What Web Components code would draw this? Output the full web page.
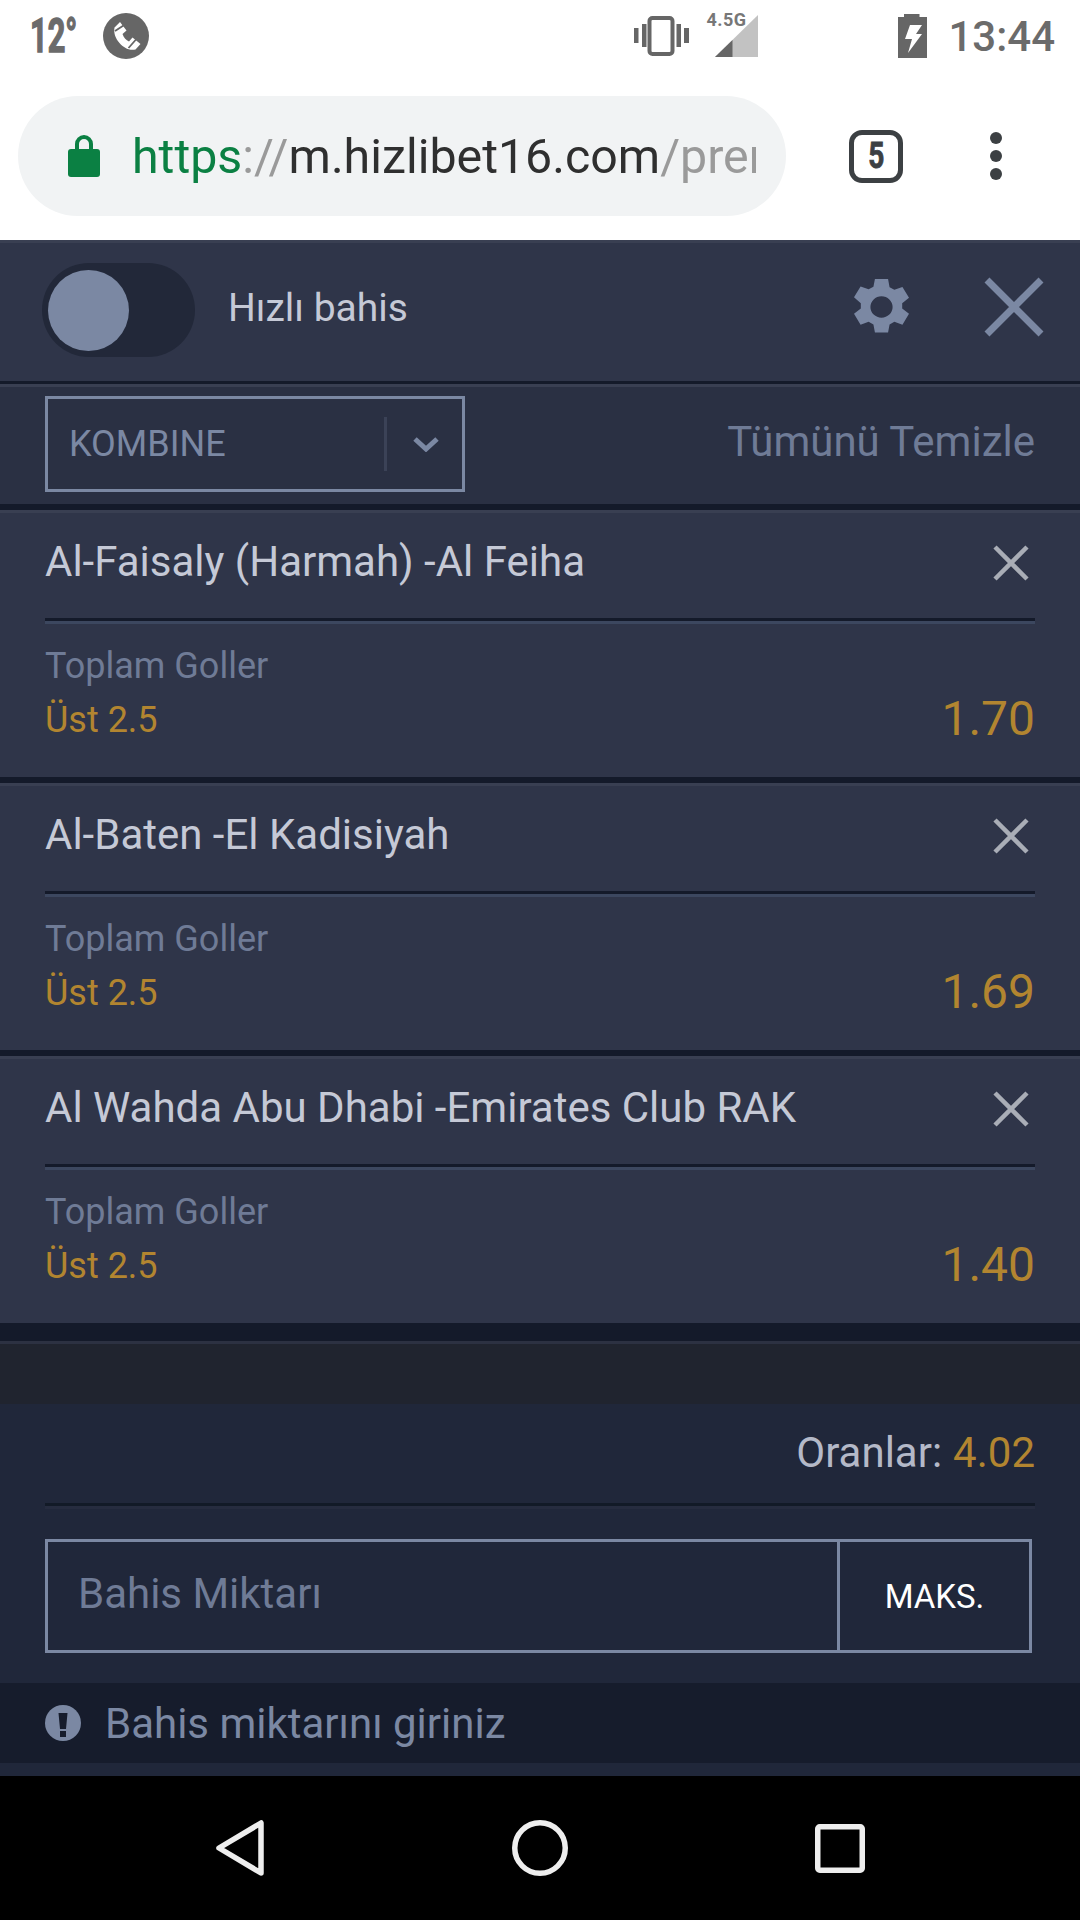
<!DOCTYPE html>
<html lang="tr">
<head>
<meta charset="utf-8">
<title>Bahis</title>
<style>
  html, body { margin: 0; padding: 0; background: #000; }
  body { width: 1080px; height: 1920px; display: flex; flex-direction: column; overflow: hidden; font-family: Roboto, "Liberation Sans", sans-serif; }
</style>
</head>
<body>
<status-bar></status-bar>
<browser-bar url-host="m.hizlibet16.com" url-path="/prem" tabs="5"></browser-bar>
<slip-header></slip-header>
<slip-toolbar></slip-toolbar>
<slip-item match="Al-Faisaly (Harmah) -Al Feiha" odds="1.70"></slip-item>
<slip-item match="Al-Baten -El Kadisiyah" odds="1.69"></slip-item>
<slip-item match="Al Wahda Abu Dhabi -Emirates Club RAK" odds="1.40" last></slip-item>
<slip-footer></slip-footer>
<nav-bar></nav-bar>

<script>
/* STATUS BAR */
class StatusBar extends HTMLElement {
  constructor() {
    super();
    this.attachShadow({mode: 'open'});
    this.shadowRoot.innerHTML = `<style>
      :host { display: flex; align-items: center; height: 72px; background: #fff; color: #6b6b6b; flex: none; }
      .temp { margin-left: 30px; width: 46px; white-space: nowrap; font: 700 48px/48px Roboto, sans-serif; -webkit-text-stroke: 1.500px #6b6b6b; transform: scaleX(.64); transform-origin: left; }
      .call { margin-left: 27px; display: flex; }
      .grow { flex: 1; }
      svg { display: block; }
      .vib { margin-right: 17px; }
      .sig { margin-right: 140px; position: relative; width: 52px; height: 44px; }
      .sig svg { position: absolute; left: 9px; top: 1px; }
      .sig span { position: absolute; left: 0; top: -3px; font: 700 18px/18px Roboto, sans-serif; color: #777; letter-spacing: .5px; }
      .bat { margin-right: 21px; }
      .time { margin-right: 25px; font: 500 42px Roboto, sans-serif; }
    </style>
    <span class="temp">12°</span>
    <span class="call"><svg width="46" height="46" viewBox="0 0 46 46"><circle cx="23" cy="23" r="23" fill="#666"/><path d="M12 14l5-5 6.500 8.500-4 3.500c1.500 4 3.500 6 6.500 7.500l3.500-4 8 6.500-5 5.500c-6.500 1.500-12-2-16-6.500s-6-10-5-15.500z" fill="#fff"/><path d="M12 18l8.500-5.500M25.500 35l7.500-8.500" stroke="#666" stroke-width="1.800" fill="none"/></svg></span>
    <span class="grow"></span>
    <span class="vib"><svg width="55" height="40" viewBox="0 0 55 40"><rect x="15.500" y="2" width="23" height="36" rx="3" fill="none" stroke="#666" stroke-width="4"/><path d="M0 12h4.500v15H0zM8 8h4.500v23H8zM42.500 8H47v23h-4.500zM50 12h5v15h-5z" fill="#666"/></svg></span>
    <span class="sig"><svg width="43" height="42" viewBox="0 0 43 42"><path d="M43 0v42H0z" fill="#c2c2c2"/><path d="M17.500 24.900V42H0z" fill="#666"/></svg><span>4.5G</span></span>
    <span class="bat"><svg width="29" height="44" viewBox="0 0 29 44"><path d="M6 0h15.500v3H29v41H0V3h6z" fill="#666"/><path d="M12 11h12l-6 9h6L10 39l4-14H7z" fill="#fff"/></svg></span>
    <span class="time">13:44</span>`;
  }
}
customElements.define('status-bar', StatusBar);

/* BROWSER BAR */
class BrowserBar extends HTMLElement {
  constructor() {
    super();
    this.attachShadow({mode: 'open'});
    this.shadowRoot.innerHTML = `<style>
      :host { display: flex; align-items: center; height: 168px; background: #fff; flex: none; }
      .pill { margin-left: 18px; width: 768px; height: 120px; border-radius: 60px; background: #f1f3f4; display: flex; align-items: center; box-sizing: border-box; padding-left: 50px; }
      .pill svg { display: block; flex: none; }
      .url { margin-left: 32px; width: 624px; overflow: hidden; white-space: nowrap; font: 400 48.300px Roboto, sans-serif; color: #9a9a9a; }
      .https { color: #0b8043; }
      .host { color: #2f2f2f; }
      .tabs { margin-left: 63px; width: 54px; height: 53px; box-sizing: border-box; border: 5px solid #3c4043; border-radius: 13px; display: flex; align-items: center; justify-content: center; font: 700 36px Roboto, sans-serif; color: #3c4043; }
      .tabs span { display: inline-block; -webkit-text-stroke: .8px #3c4043; transform: scaleX(.78); }
      .dots { margin-left: 87px; width: 12px; display: flex; flex-direction: column; gap: 6px; }
      .dots i { width: 12px; height: 12px; border-radius: 50%; background: #3c4043; }
    </style>
    <div class="pill">
      <svg width="32" height="42" viewBox="0 0 32 42"><path d="M9 18V9a7 7 0 0 1 14 0v9" fill="none" stroke="#0b8043" stroke-width="4"/><rect y="14" width="32" height="28" rx="3" fill="#0b8043"/></svg>
      <div class="url"><span class="https">https</span>://<span class="host">${this.getAttribute('url-host')}</span>${this.getAttribute('url-path')}</div>
    </div>
    <div class="tabs"><span>${this.getAttribute('tabs')}</span></div>
    <div class="dots"><i></i><i></i><i></i></div>`;
  }
}
customElements.define('browser-bar', BrowserBar);

/* SLIP HEADER */
class SlipHeader extends HTMLElement {
  constructor() {
    super();
    this.attachShadow({mode: 'open'});
    this.shadowRoot.innerHTML = `<style>
      :host { display: flex; align-items: center; height: 144px; box-sizing: border-box; background: #2f3549; border-top: 3px solid #393f52; border-bottom: 3px solid #141a2a; padding-bottom: 4px; flex: none; }
      .toggle { margin-left: 42px; width: 147px; height: 94px; border-radius: 47px; background: #222839; display: flex; align-items: center; padding-left: 6px; }
      .toggle i { width: 81px; height: 81px; border-radius: 50%; background: #7b88a3; }
      .label { margin-left: 33px; flex: 1; font: 400 39px Roboto, sans-serif; color: #c5c9d6; padding-bottom: 4px; }
      .gear { margin-right: 75px; display: block; margin-bottom: 6px; }
      .close { margin-right: 36px; display: block; margin-bottom: 6px; }
    </style>
    <div class="toggle"><i></i></div>
    <div class="label">Hızlı bahis</div>
    <svg class="gear" width="55" height="58" viewBox="1.100 0 21.800 24" preserveAspectRatio="none"><path fill="#7b88a3" fill-rule="evenodd" d="M9.400 0h5.200l.6 3.400 1.900 1.100 3.200-1.200 2.600 4.500-2.700 2.200v2.200l2.700 2.200-2.600 4.500-3.200-1.200-1.900 1.100-.6 3.400H9.400l-.6-3.400-1.900-1.100-3.200 1.200-2.600-4.500 2.700-2.200v-2.200L1.100 7.600l2.600-4.500 3.200 1.200 1.900-1.100zM12 7.200a4.400 4.400 0 1 0 0 8.800 4.400 4.400 0 0 0 0-8.800z" transform="translate(0 .4)"/></svg>
    <svg class="close" width="60" height="60" viewBox="0 0 60 60"><path d="M3 3l54 54M57 3L3 57" stroke="#7b88a3" stroke-width="7" fill="none"/></svg>`;
  }
}
customElements.define('slip-header', SlipHeader);

/* TOOLBAR WITH BET TYPE SELECT */
class SlipToolbar extends HTMLElement {
  constructor() {
    super();
    this.attachShadow({mode: 'open'});
    this.shadowRoot.innerHTML = `<style>
      :host { display: flex; align-items: center; justify-content: space-between; height: 126px; box-sizing: border-box; background: #2a3043; border-top: 3px solid #393f52; border-bottom: 6px solid #141a2a; padding: 0 45px; flex: none; }
      .select { width: 420px; height: 96px; box-sizing: border-box; border: 3px solid #7b88a3; display: flex; align-items: center; padding-left: 21px; font: 400 36px Roboto, sans-serif; color: #7b88a3; margin-top: -3px; }
      .select span { flex: 1; }
      .sep { width: 3px; height: 54px; background: #3b4257; }
      .arrow { width: 75px; display: flex; justify-content: center; padding-left: 2px; box-sizing: border-box; }
      .clear { font: 400 42px Roboto, sans-serif; color: #6f7b96; margin-top: -8px; }
    </style>
    <div class="select"><span>KOMBINE</span><div class="sep"></div><div class="arrow"><svg width="26" height="16" viewBox="0 0 26 16"><path d="M2 3l11 10L24 3" fill="none" stroke="#7b88a3" stroke-width="5"/></svg></div></div>
    <div class="clear">Tümünü Temizle</div>`;
  }
}
customElements.define('slip-toolbar', SlipToolbar);

/* ONE SELECTION */
class SlipItem extends HTMLElement {
  constructor() {
    super();
    this.attachShadow({mode: 'open'});
    this.shadowRoot.innerHTML = `<style>
      :host { display: block; height: 273px; box-sizing: border-box; background: #2f3549; border-top: 3px solid #393f52; border-bottom: 6px solid #141a2a; flex: none; padding: 0 45px; }
      :host([last]) { height: 267px; border-bottom: 0; }
      .top { display: flex; align-items: center; justify-content: space-between; height: 108px; box-sizing: border-box; border-bottom: 3px solid #141a2a; box-shadow: 0 3px 0 #3c475f; font: 400 42px Roboto, sans-serif; color: #c5c9d6; padding-bottom: 9px; }
      .top svg { margin-right: 6px; display: block; margin-top: 4px; }
      .bottom { display: flex; justify-content: space-between; align-items: flex-end; padding-top: 22px; }
      .type { font: 400 36px/46px Roboto, sans-serif; color: #6f7b96; }
      .pick { font: 400 36px/46px Roboto, sans-serif; color: #b28530; margin-top: 8px; }
      .odds { font: 400 48px/54px Roboto, sans-serif; color: #b28530; margin-bottom: -3px; }
    </style>
    <div class="top"><span>${this.getAttribute('match')}</span><svg width="36" height="36" viewBox="0 0 36 36"><path d="M2 2l32 32M34 2L2 34" stroke="#a9adb6" stroke-width="4.500" fill="none"/></svg></div>
    <div class="bottom"><div><div class="type">Toplam Goller</div><div class="pick">Üst 2.5</div></div><div class="odds">${this.getAttribute('odds')}</div></div>`;
  }
}
customElements.define('slip-item', SlipItem);

/* TOTALS AND STAKE */
class SlipFooter extends HTMLElement {
  constructor() {
    super();
    this.attachShadow({mode: 'open'});
    this.shadowRoot.innerHTML = `<style>
      :host { display: flex; flex-direction: column; flex: 1; background: #20273a; }
      .band { height: 18px; background: #141a2a; border-bottom: 3px solid #2c3142; }
      .gap { height: 60px; background: #20242f; }
      .total { margin: 0 45px; height: 102px; box-sizing: border-box; border-bottom: 3px solid #121a27; box-shadow: 0 3px 0 #262c3f; padding-bottom: 3px; display: flex; align-items: center; justify-content: flex-end; font: 400 42px Roboto, sans-serif; color: #b4b9c8; }
      .total b { font-weight: 400; color: #b28530; margin-left: 11px; }
      .stake { margin: 33px 48px 0 45px; height: 114px; box-sizing: border-box; border: 3px solid #7b88a3; display: flex; }
      .input { flex: 1; font: 400 42px Roboto, sans-serif; color: #6f7b96; padding: 27px 0 0 30px; }
      .max { width: 192px; box-sizing: border-box; border-left: 3px solid #7b88a3; display: flex; align-items: center; justify-content: center; font: 400 33px Roboto, sans-serif; color: #fff; }
      .alert { margin-top: 30px; height: 80px; background: #161c2c; display: flex; align-items: center; padding-left: 45px; font: 400 42px Roboto, sans-serif; color: #7b88a3; }
      .alert svg { margin-right: 24px; display: block; }
    </style>
    <div class="band"></div>
    <div class="gap"></div>
    <div class="total">Oranlar:<b>4.02</b></div>
    <div class="stake"><div class="input">Bahis Miktarı</div><div class="max">MAKS.</div></div>
    <div class="alert"><svg width="36" height="36" viewBox="0 0 36 36"><circle cx="18" cy="18" r="18" fill="#7b88a3"/><path d="M13.500 8h9l-1.500 16h-6zM15 26h6v6h-6z" fill="#161c2c"/></svg>Bahis miktarını giriniz</div>`;
  }
}
customElements.define('slip-footer', SlipFooter);

/* ANDROID NAV BAR */
class NavBar extends HTMLElement {
  constructor() {
    super();
    this.attachShadow({mode: 'open'});
    this.shadowRoot.innerHTML = `<style>
      :host { display: flex; height: 144px; background: #000; flex: none; align-items: center; justify-content: center; }
      .b { width: 300px; display: flex; justify-content: center; }
      svg { display: block; }
    </style>
    <div class="b"><svg width="48" height="56" viewBox="0 0 48 56"><path d="M45 3v50L3 28z" fill="none" stroke="#eee" stroke-width="5.500" stroke-linejoin="round"/></svg></div>
    <div class="b"><svg width="56" height="56" viewBox="0 0 56 56"><circle cx="28" cy="28" r="25.250" fill="none" stroke="#eee" stroke-width="5.500"/></svg></div>
    <div class="b"><svg width="50" height="49" viewBox="0 0 50 49"><rect x="2.750" y="2.750" width="44.500" height="43.500" rx="2" fill="none" stroke="#eee" stroke-width="5.500"/></svg></div>`;
  }
}
customElements.define('nav-bar', NavBar);
</script>
</body>
</html>
